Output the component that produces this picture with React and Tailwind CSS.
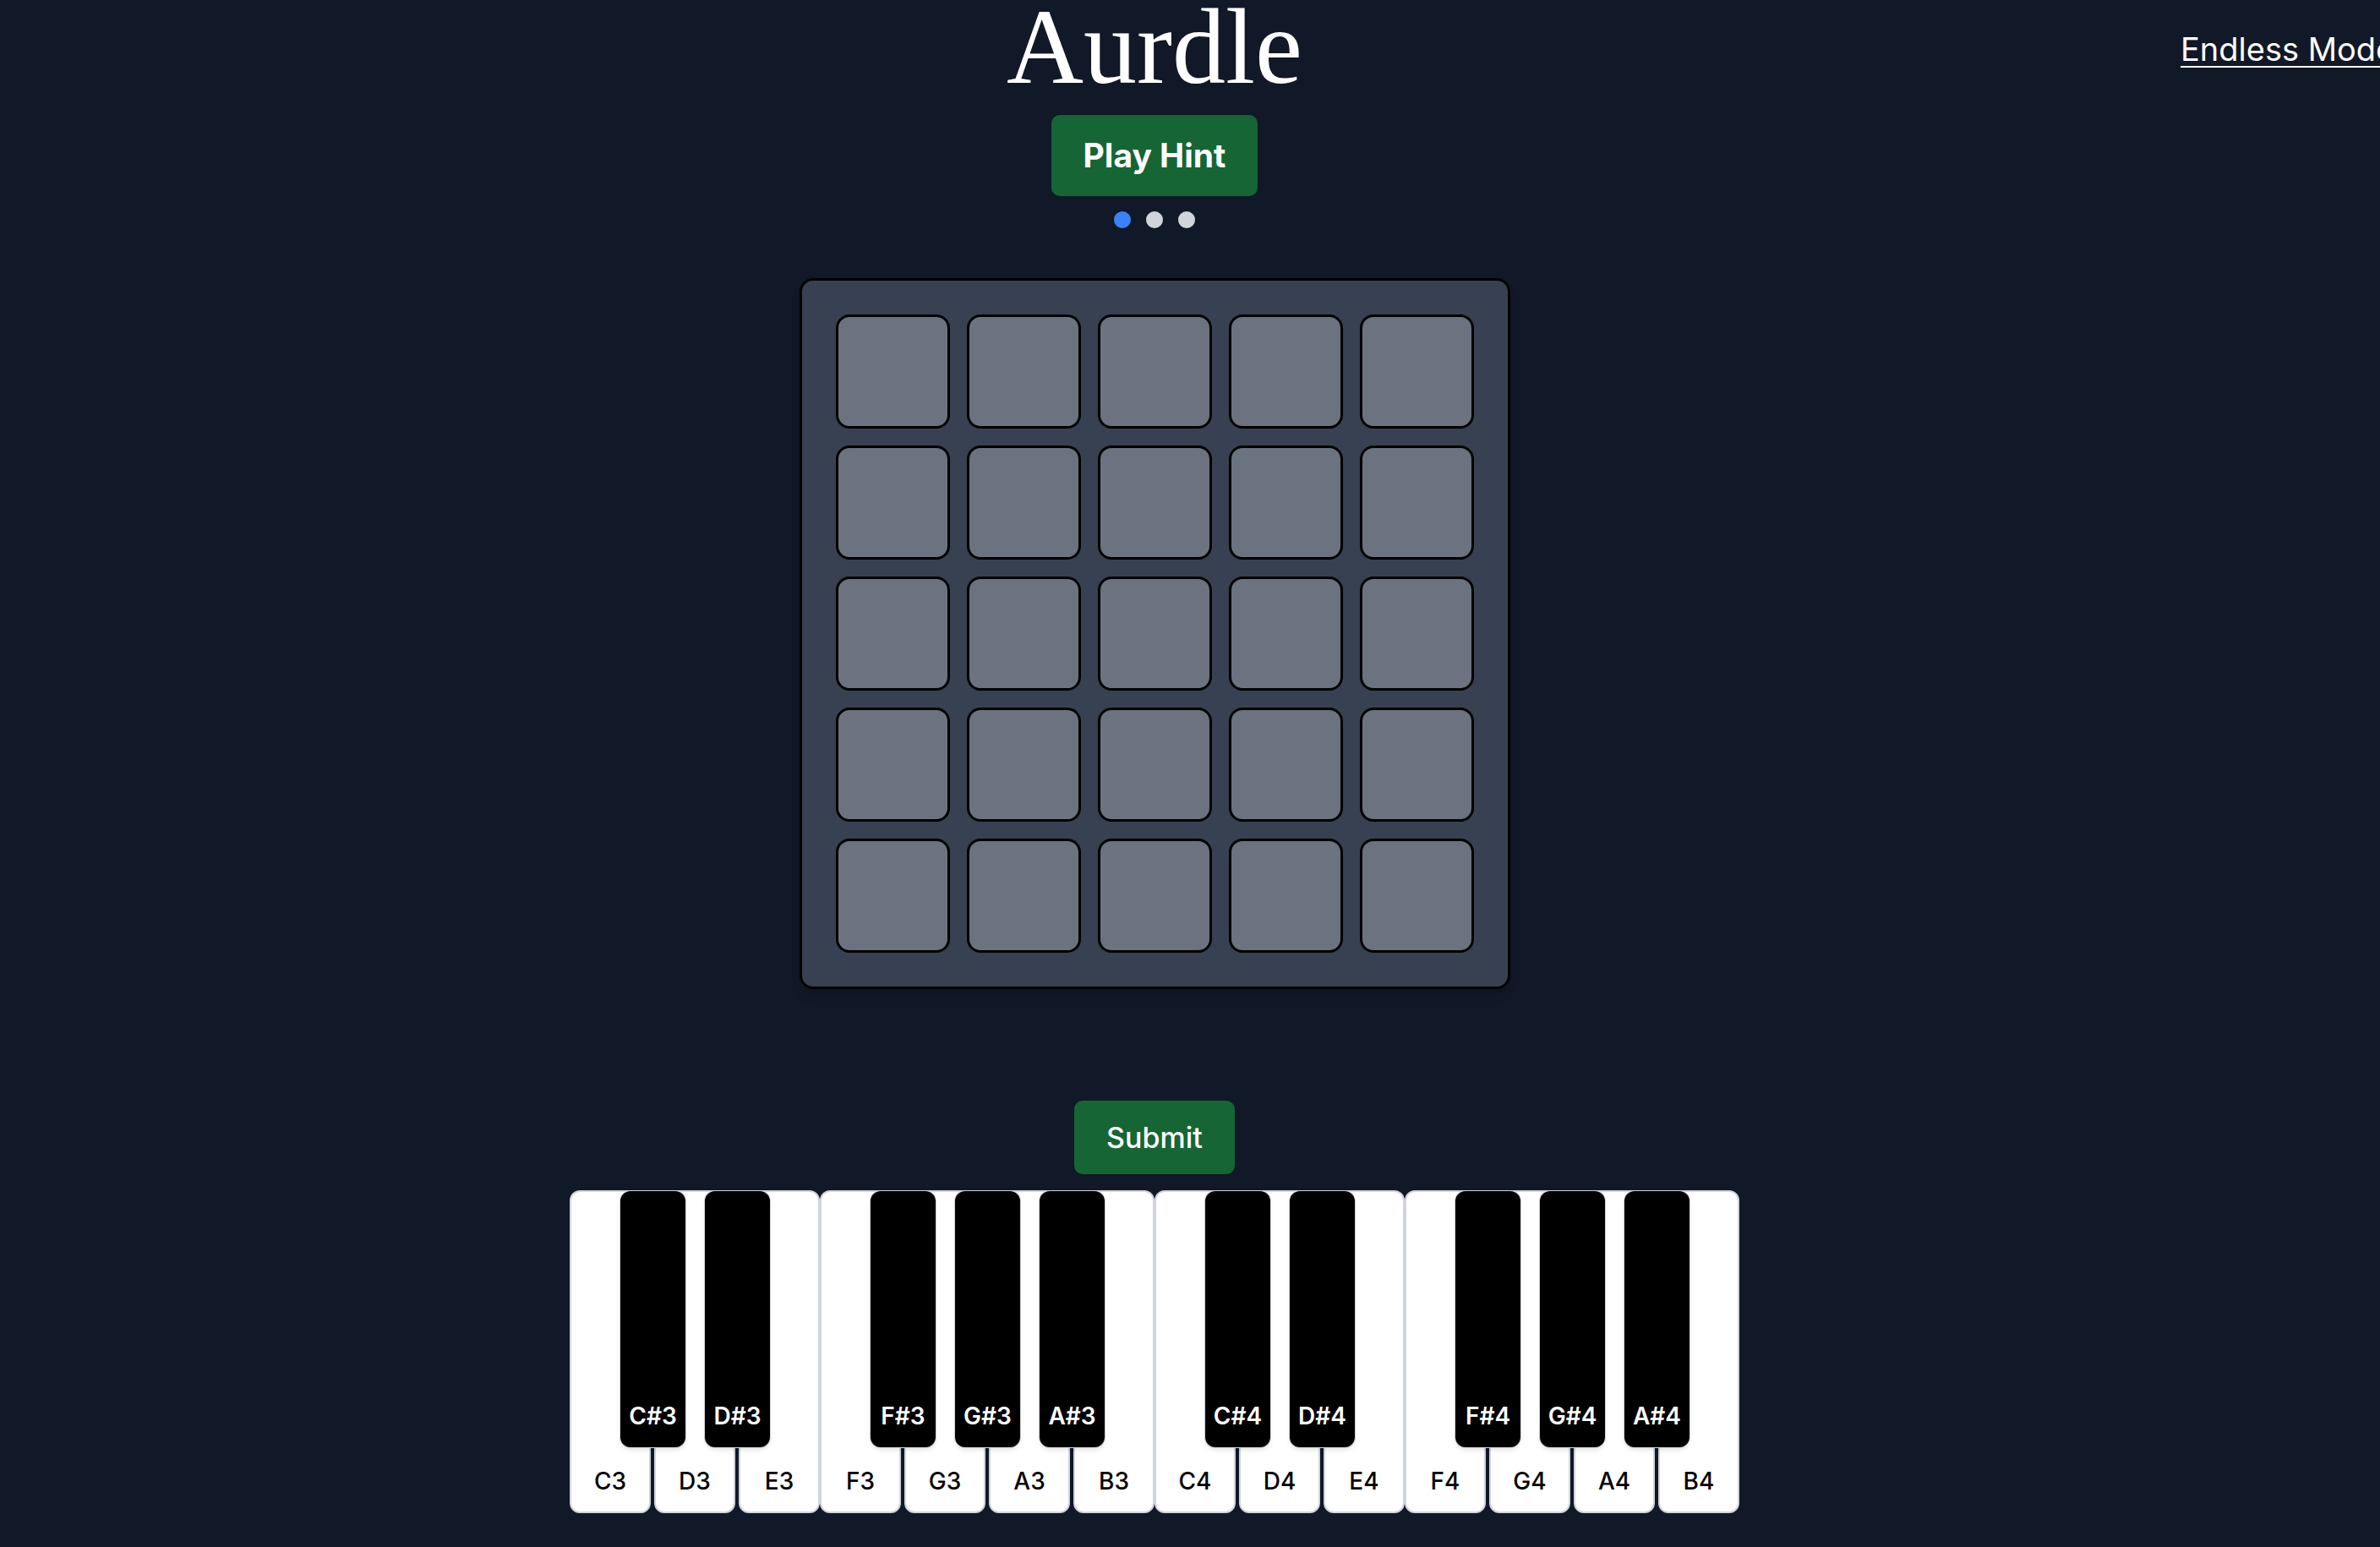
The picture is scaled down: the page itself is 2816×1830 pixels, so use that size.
import { useState } from "react";

const OCTAVES = [3, 4];
const WHITE = ["C", "D", "E", "F", "G", "A", "B"];
// white notes that have a sharp sitting on their right edge
const HAS_SHARP = ["C", "D", "F", "G", "A"];

const keys = OCTAVES.flatMap((o) =>
  WHITE.map((n) => ({
    note: `${n}${o}`,
    sharp: HAS_SHARP.includes(n) ? `${n}#${o}` : null,
  }))
);

const WhiteKey = ({ note, sharp, gap }) => (
  <div
    className={`relative flex flex-col justify-end items-center w-[96px] h-[382px] bg-white border-2 border-[#d1d5db] rounded-[12px] pb-[22px] ${
      gap ? "mr-[4px]" : ""
    }`}
  >
    <span className="text-[28px] leading-none font-medium text-black">
      {note}
    </span>
    {sharp && (
      <div className="absolute z-10 top-[-1px] left-[58px] flex flex-col justify-end items-center w-[77px] h-[303px] bg-black rounded-[12px] ring-1 ring-[#d1d5db] shadow-md pb-[23px]">
        <span className="text-[28px] leading-none font-semibold text-white">
          {sharp}
        </span>
      </div>
    )}
  </div>
);

const App = () => {
  const [hint] = useState(0);
  const tiles = Array.from({ length: 25 });

  return (
    <div
      className="relative min-h-screen w-full overflow-hidden bg-[#111827] text-white"
      style={{ fontFamily: "Inter, 'Noto Sans', sans-serif" }}
    >
      <a
        href="#"
        className="absolute top-[39px] left-[2580px] whitespace-nowrap text-[38px] leading-none text-white underline decoration-2 underline-offset-[6px]"
      >
        Endless Mode
      </a>

      <div className="flex flex-col items-center w-[2732px]">
        <h1
          className="text-[126px] leading-[112px] text-white"
          style={{ fontFamily: "'Liberation Serif', serif" }}
        >
          Aurdle
        </h1>

        <button className="mt-[24px] w-[244px] h-[96px] rounded-[10px] bg-[#166534] text-[39px] font-bold text-white">
          Play Hint
        </button>

        <div className="flex gap-[18px] mt-[18px]">
          {[0, 1, 2].map((i) => (
            <div
              key={i}
              className={`w-[20px] h-[20px] rounded-full ${
                i === hint ? "bg-[#3b82f6]" : "bg-[#d1d5db]"
              }`}
            />
          ))}
        </div>

        <div className="mt-[59px] p-[40px] bg-[#374151] border-[3px] border-black rounded-[16px] shadow-lg">
          <div className="grid grid-cols-5 gap-[20px]">
            {tiles.map((_, i) => (
              <div
                key={i}
                className="w-[135px] h-[135px] bg-[#6b7280] border-[3px] border-black rounded-[16px]"
              />
            ))}
          </div>
        </div>

        <button className="mt-[132px] w-[190px] h-[87px] rounded-[10px] bg-[#166534] text-[34px] font-medium text-white">
          Submit
        </button>

        <div className="flex mt-[19px]">
          {keys.map((k) => (
            <WhiteKey key={k.note} note={k.note} sharp={k.sharp} gap={!!k.sharp} />
          ))}
        </div>
      </div>
    </div>
  );
};

export default App;
